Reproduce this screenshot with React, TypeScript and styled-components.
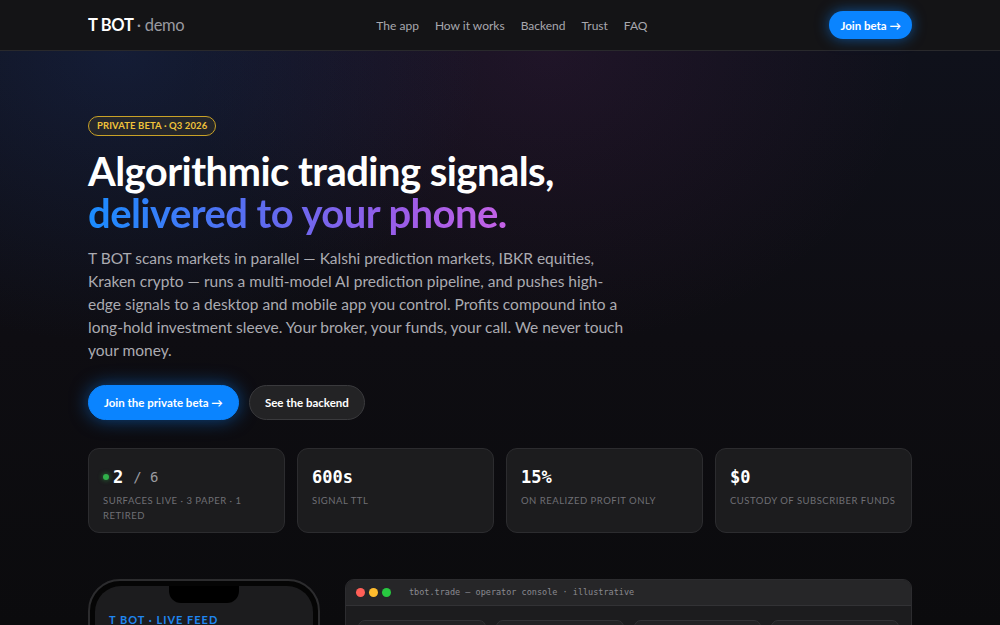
import React from "react";
import styled, { createGlobalStyle } from "styled-components";

const GlobalStyle = createGlobalStyle`
  html, body {
    margin: 0;
    padding: 0;
    background: #0b0b0d;
    color: #f2f2f4;
    font-family: Lato, "Open Sans", sans-serif;
    -webkit-font-smoothing: antialiased;
  }
  * { box-sizing: border-box; }
`;

const mono = `"DejaVu Sans Mono", "Liberation Mono", monospace`;

const Page = styled.div`
  height: 625px;
  overflow: hidden;
  background: #0b0b0d;
`;

const Nav = styled.header`
  height: 51px;
  background: #141416;
  border-bottom: 1px solid #29292c;
`;

const NavInner = styled.div`
  width: 824px;
  margin: 0 auto;
  height: 100%;
  display: flex;
  align-items: center;
`;

const Logo = styled.div`
  font-size: 16.5px;
  font-weight: 700;
  letter-spacing: -0.3px;
  color: #fff;
  white-space: nowrap;

  span {
    font-weight: 400;
    color: #9a9aa0;
  }
`;

const NavLinks = styled.nav`
  display: flex;
  gap: 16px;
  margin: 0 auto;
  padding-left: 10px;
  white-space: nowrap;
`;

const NavLink = styled.a`
  font-size: 12px;
  color: #a8a8ae;
  text-decoration: none;
`;

const NavCta = styled.a`
  height: 28px;
  padding: 0 11px;
  display: inline-flex;
  align-items: center;
  white-space: nowrap;
  border-radius: 999px;
  background: #0a84ff;
  color: #fff;
  font-size: 11.5px;
  font-weight: 700;
  box-shadow: 0 0 14px rgba(10, 132, 255, 0.55);
`;

const Hero = styled.section`
  height: 574px;
  background:
    radial-gradient(ellipse 520px 420px at 12% 0%, rgba(40, 70, 150, 0.22), transparent 70%),
    radial-gradient(ellipse 520px 420px at 55% 0%, rgba(120, 40, 110, 0.16), transparent 70%),
    linear-gradient(180deg, #0f111b 0%, #0e0d12 50%, #0b0b0d 100%);
  padding-top: 62px;
`;

const Container = styled.div`
  width: 824px;
  margin: 0 auto;
`;

const Pill = styled.div`
  display: inline-flex;
  align-items: center;
  height: 20px;
  padding: 0 8px;
  border: 1px solid #c9a227;
  border-radius: 999px;
  background: rgba(201, 162, 39, 0.1);
  color: #f0c23a;
  font-size: 9.5px;
  font-weight: 700;
  letter-spacing: 0.1px;
`;

const Title = styled.h1`
  margin: 14px 0 0;
  font-size: 40px;
  line-height: 42px;
  font-weight: 700;
  letter-spacing: -0.55px;
  color: #fff;
`;

const Gradient = styled.span`
  background: linear-gradient(90deg, #1a8cff 0%, #5b6cf0 40%, #9b5ce8 75%, #c562e6 100%);
  -webkit-background-clip: text;
  background-clip: text;
  color: transparent;
`;

const Lede = styled.p`
  margin: 13px 0 0;
  width: 536px;
  font-size: 15.5px;
  line-height: 23.2px;
  color: #ababb1;
`;

const Actions = styled.div`
  display: flex;
  gap: 10px;
  margin-top: 22px;
`;

const Button = styled.a<{ $primary?: boolean }>`
  height: 35px;
  padding: 0 15px;
  display: inline-flex;
  align-items: center;
  border-radius: 999px;
  font-size: 11.5px;
  font-weight: 700;
  color: #fff;
  background: ${(p) => (p.$primary ? "#0a84ff" : "#232325")};
  border: 1px solid ${(p) => (p.$primary ? "#0a84ff" : "#3a3a3d")};
  box-shadow: ${(p) => (p.$primary ? "0 0 18px rgba(10,132,255,0.5)" : "none")};
`;

const Stats = styled.div`
  display: grid;
  grid-template-columns: repeat(4, 1fr);
  gap: 12px;
  margin-top: 28px;
`;

const StatCard = styled.div`
  height: 85px;
  padding: 18px 14px;
  background: #1c1c1e;
  border: 1px solid #2c2c2f;
  border-radius: 11px;
`;

const StatValue = styled.div`
  display: flex;
  align-items: center;
  gap: 4px;
  font-family: ${mono};
  font-size: 17px;
  font-weight: 700;
  color: #fff;
  line-height: 20px;

  small {
    font-size: 14px;
    font-weight: 400;
    color: #9a9aa0;
    margin-left: 6px;
  }
`;

const Dot = styled.span`
  width: 6px;
  height: 6px;
  border-radius: 50%;
  background: #30b04a;
  box-shadow: 0 0 5px rgba(48, 176, 74, 0.7);
`;

const StatLabel = styled.div`
  margin-top: 6px;
  font-size: 9.5px;
  line-height: 15px;
  letter-spacing: 0.5px;
  text-transform: uppercase;
  color: #6f6f75;
`;

const Showcase = styled.div`
  display: flex;
  gap: 25px;
  margin-top: 46px;
  align-items: flex-start;
`;

const Phone = styled.div`
  width: 232px;
  height: 200px;
  flex-shrink: 0;
  border-radius: 32px;
  background: #050505;
  border: 2px solid #2c2c2e;
  padding: 5px;
`;

const Screen = styled.div`
  position: relative;
  height: 100%;
  border-radius: 26px;
  background: #1c1c1e;
  padding: 27px 14px 0;
`;

const Notch = styled.div`
  position: absolute;
  top: 0;
  left: 50%;
  transform: translateX(-50%);
  width: 70px;
  height: 17px;
  background: #000;
  border-radius: 0 0 12px 12px;
`;

const FeedTitle = styled.div`
  font-size: 11px;
  font-weight: 700;
  letter-spacing: 1px;
  color: #1f86f0;
`;

const Console = styled.div`
  flex: 1;
  height: 200px;
  border-radius: 9px;
  background: #1c1c1e;
  border: 1px solid #2c2c2f;
  overflow: hidden;
`;

const TitleBar = styled.div`
  height: 26px;
  display: flex;
  align-items: center;
  gap: 4px;
  padding: 0 10px;
  background: #262628;
  border-bottom: 1px solid #323235;
`;

const Light = styled.span<{ $c: string }>`
  width: 9px;
  height: 9px;
  border-radius: 50%;
  background: ${(p) => p.$c};
`;

const ConsoleTitle = styled.span`
  margin-left: 14px;
  font-family: ${mono};
  font-size: 8.5px;
  color: #8a8a90;
`;

const ConsoleGrid = styled.div`
  display: grid;
  grid-template-columns: repeat(4, 1fr);
  gap: 10px;
  padding: 14px 12px;
`;

const Tile = styled.div`
  height: 60px;
  border-radius: 7px;
  background: #222224;
  border: 1px solid #323235;
`;

const links = ["The app", "How it works", "Backend", "Trust", "FAQ"];

const stats = [
  { value: "600s", label: "Signal TTL" },
  { value: "15%", label: "On realized profit only" },
  { value: "$0", label: "Custody of subscriber funds" },
];

export default function App() {
  return (
    <Page>
      <GlobalStyle />
      <Nav>
        <NavInner>
          <Logo>
            T BOT <span>· demo</span>
          </Logo>
          <NavLinks>
            {links.map((l) => (
              <NavLink key={l}>{l}</NavLink>
            ))}
          </NavLinks>
          <NavCta>Join beta →</NavCta>
        </NavInner>
      </Nav>
      <Hero>
        <Container>
          <Pill>PRIVATE BETA · Q3 2026</Pill>
          <Title>
            Algorithmic trading signals,
            <br />
            <Gradient>delivered to your phone.</Gradient>
          </Title>
          <Lede>
            T BOT scans markets in parallel — Kalshi prediction markets, IBKR
            equities, Kraken crypto — runs a multi-model AI prediction pipeline,
            and pushes high-edge signals to a desktop and mobile app you
            control. Profits compound into a long-hold investment sleeve. Your
            broker, your funds, your call. We never touch your money.
          </Lede>
          <Actions>
            <Button $primary>Join the private beta →</Button>
            <Button>See the backend</Button>
          </Actions>
          <Stats>
            <StatCard>
              <StatValue>
                <Dot />
                2<small>/ 6</small>
              </StatValue>
              <StatLabel>Surfaces live · 3 paper · 1 retired</StatLabel>
            </StatCard>
            {stats.map((s) => (
              <StatCard key={s.label}>
                <StatValue>{s.value}</StatValue>
                <StatLabel>{s.label}</StatLabel>
              </StatCard>
            ))}
          </Stats>
          <Showcase>
            <Phone>
              <Screen>
                <Notch />
                <FeedTitle>T BOT · LIVE FEED</FeedTitle>
              </Screen>
            </Phone>
            <Console>
              <TitleBar>
                <Light $c="#ff5f57" />
                <Light $c="#febc2e" />
                <Light $c="#28c840" />
                <ConsoleTitle>tbot.trade — operator console · illustrative</ConsoleTitle>
              </TitleBar>
              <ConsoleGrid>
                <Tile />
                <Tile />
                <Tile />
                <Tile />
              </ConsoleGrid>
            </Console>
          </Showcase>
        </Container>
      </Hero>
    </Page>
  );
}
